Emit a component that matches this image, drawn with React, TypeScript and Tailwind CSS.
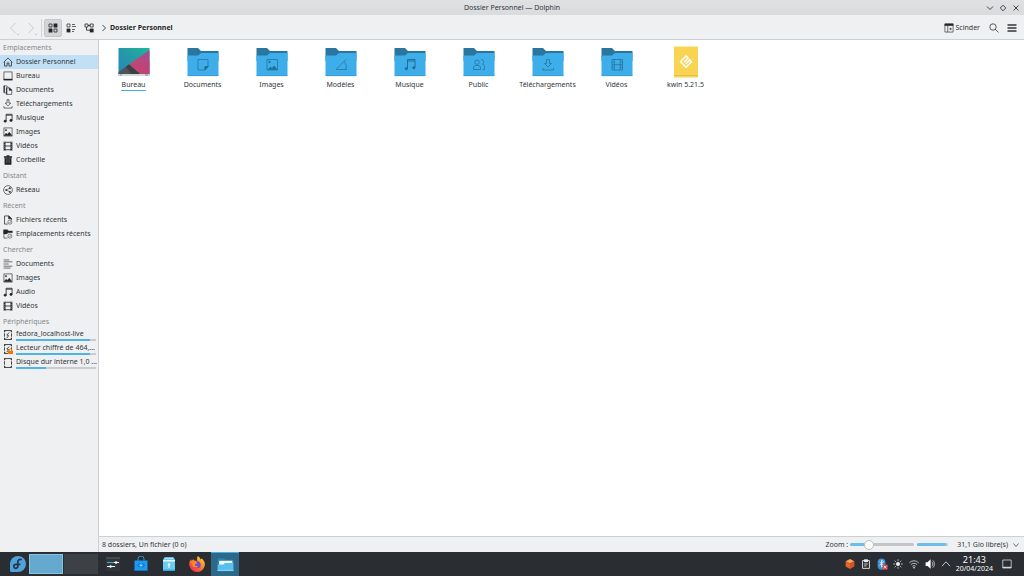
import React from 'react';

type IconName =
  | 'home' | 'desktop' | 'documents' | 'download' | 'music' | 'image' | 'video' | 'trash'
  | 'network' | 'recentFile' | 'recentFolder' | 'lines' | 'disk' | 'lockedDisk' | 'emptyDisk';

interface Place {
  label: string;
  icon: IconName;
  active?: boolean;
  used?: number;
}

interface PlaceGroup {
  title: string;
  places: Place[];
}

const groups: PlaceGroup[] = [
  {
    title: 'Emplacements',
    places: [
      { label: 'Dossier Personnel', icon: 'home', active: true },
      { label: 'Bureau', icon: 'desktop' },
      { label: 'Documents', icon: 'documents' },
      { label: 'Téléchargements', icon: 'download' },
      { label: 'Musique', icon: 'music' },
      { label: 'Images', icon: 'image' },
      { label: 'Vidéos', icon: 'video' },
      { label: 'Corbeille', icon: 'trash' },
    ],
  },
  { title: 'Distant', places: [{ label: 'Réseau', icon: 'network' }] },
  {
    title: 'Récent',
    places: [
      { label: 'Fichiers récents', icon: 'recentFile' },
      { label: 'Emplacements récents', icon: 'recentFolder' },
    ],
  },
  {
    title: 'Chercher',
    places: [
      { label: 'Documents', icon: 'lines' },
      { label: 'Images', icon: 'image' },
      { label: 'Audio', icon: 'music' },
      { label: 'Vidéos', icon: 'video' },
    ],
  },
];

const devices: Place[] = [
  { label: 'fedora_localhost-live', icon: 'disk', used: 93 },
  { label: 'Lecteur chiffré de 464,...', icon: 'lockedDisk', used: 93 },
  { label: 'Disque dur interne 1,0 ...', icon: 'emptyDisk', used: 37 },
];

const diskFrame = (
  <>
    <rect x="2.5" y="1" width="11" height="14" strokeWidth="1.3" />
    <path d="M1 4.500h3M1 11.500h3M12 4.500h3M12 11.500h3" stroke="#eff0f1" strokeWidth="1.500" />
    <path d="M3 1v1.500M13 1v1.500M3 13.500V15M13 13.500V15" strokeWidth="2" />
  </>
);

const icons: Record<IconName, React.ReactNode> = {
  home: <path d="M1 8.500 8 1.500l7 7M2.500 7.500v7h4v-5h3v5h4v-7" strokeWidth="1.200" />,
  desktop: (
    <>
      <rect x="1.500" y="1.500" width="13" height="13" />
      <path d="M1 13.500h14" strokeWidth="2" />
    </>
  ),
  documents: (
    <>
      <path d="M4.500 12.500h-3v-11h5l2 2" />
      <path d="M5.500 4.500h5l3.500 3.500v7H5.500z" />
      <path d="M10 4.500v4h4z" fill="currentColor" />
      <path d="M2 1v11M6 4v11" strokeWidth="1.600" />
    </>
  ),
  download: <path d="M6.500 1v5.500H3.500L8 11l4.500-4.500h-3V1zM1.500 11.500v3h13v-3" />,
  music: (
    <>
      <path d="M5 12.500V2h9.500v9.500M5 3.500h9.500" strokeWidth="1.300" />
      <ellipse cx="3.500" cy="13" rx="2" ry="1.700" fill="currentColor" />
      <ellipse cx="12.800" cy="11.800" rx="2" ry="1.700" fill="currentColor" />
    </>
  ),
  image: (
    <>
      <rect x="1.500" y="1.500" width="13" height="13" />
      <path d="m2 13.500 3-3.500 2 2 3-3.500 4 5z" fill="currentColor" />
      <circle cx="4.800" cy="5" r="1" fill="currentColor" />
    </>
  ),
  video: (
    <>
      <path d="M2.500 1v14M13.500 1v14" strokeWidth="3" />
      <path d="M3 2h10M3 8h10M3 14h10" strokeWidth="1.300" />
      <path d="M2.500 2v12M13.500 2v12" stroke="#eff0f1" strokeWidth="1" strokeDasharray="1 2" />
    </>
  ),
  trash: (
    <>
      <path d="M2 2.500h4V1h4v1.500h4V4H2zM3 5h10v10H3z" fill="currentColor" />
      <path d="M6.300 6.500v6M9.700 6.500v6" stroke="#8a8d90" />
    </>
  ),
  network: (
    <>
      <circle cx="8" cy="8" r="7" />
      <path d="m11 5-5.500 3 5.500 3" strokeWidth=".8" />
      <circle cx="11" cy="5" r="1" fill="currentColor" />
      <circle cx="5" cy="8" r="1" fill="currentColor" />
      <circle cx="11" cy="11" r="1" fill="currentColor" />
    </>
  ),
  recentFile: (
    <>
      <path d="M7.500 14.500h-5v-13h7l4 4v2.500" strokeWidth="1.200" />
      <path d="M9 1.500v4.500h4.500z" fill="currentColor" />
      <circle cx="11" cy="11.500" r="3.300" strokeWidth=".8" />
      <path d="m9.500 12 1 1 2-3" strokeWidth=".8" />
    </>
  ),
  recentFolder: (
    <>
      <path d="M7 14.500H1.500v-13" />
      <path d="M1 1h6l2 2h6v3H8L6 8H1z" fill="currentColor" strokeWidth=".5" />
      <circle cx="11" cy="11.500" r="3.300" strokeWidth=".8" />
      <path d="m9.500 12 1 1 2-3" strokeWidth=".8" />
    </>
  ),
  lines: <path d="M1 1.500h9M1 4.500h14M1 8h8M1 11.500h14M1 14.500h11" />,
  disk: (
    <>
      {diskFrame}
      <path d="M10 4 6 8l3 1-3 4" strokeWidth="1.300" />
    </>
  ),
  lockedDisk: (
    <>
      {diskFrame}
      <path d="M10 4 6 8l3 1-3 4" strokeWidth="1.300" />
      <path d="M8 11h8v5H8z" fill="#f67400" stroke="none" />
      <path d="M10 11V9.500a2 2 0 0 1 4 0V11" stroke="#f67400" strokeWidth="1.400" />
    </>
  ),
  emptyDisk: diskFrame,
};

const PlaceIcon: React.FC<{ name: IconName }> = ({ name }) => (
  <svg viewBox="0 0 16 16" className="size-[10px] shrink-0 text-[#232629]" fill="none" stroke="currentColor">
    {icons[name]}
  </svg>
);

const PlaceRow: React.FC<{ place: Place }> = ({ place }) => (
  <li>
    <a
      href="#"
      className={`flex h-[14px] items-center gap-[3px] pl-[3px] pr-[2px] ${place.active ? 'bg-[#c2e0f5]' : ''}`}
    >
      <PlaceIcon name={place.icon} />
      {place.used === undefined ? (
        <span className="truncate">{place.label}</span>
      ) : (
        <span className="flex min-w-0 flex-1 flex-col">
          <span className="leading-[10px] whitespace-nowrap">{place.label}</span>
          <span className="h-[2px] bg-[#c9cbcd]">
            <span className="block h-[2px] bg-[#4db3e9]" style={{ width: `${place.used}%` }} />
          </span>
        </span>
      )}
    </a>
  </li>
);

const GroupTitle: React.FC<{ children: React.ReactNode }> = ({ children }) => (
  <h2 className="flex h-[14px] items-center pl-[3px] text-[#85888b]">{children}</h2>
);

const Sidebar: React.FC = () => (
  <nav className="flex w-[99px] shrink-0 flex-col gap-[2px] border-r border-[#cdcfd0] pt-px">
    {groups.map((group) => (
      <section key={group.title}>
        <GroupTitle>{group.title}</GroupTitle>
        <ul>
          {group.places.map((place) => <PlaceRow key={place.label} place={place} />)}
        </ul>
      </section>
    ))}
    <section>
      <GroupTitle>Périphériques</GroupTitle>
      <ul className="-mt-px">
        {devices.map((place) => <PlaceRow key={place.label} place={place} />)}
      </ul>
    </section>
  </nav>
);

const Folder: React.FC<{ children: React.ReactNode }> = ({ children }) => (
  <svg viewBox="0 0 32 32" className="size-8" fill="none">
    <path d="M.5 2h10.500l3 3h17.500v10H.5z" fill="#2a769f" />
    <path d="M.5 9.500H11l3-2.500h17.500v23H.5z" fill="#3daee9" />
    <path d="M.5 29.700h31" stroke="#3693c4" strokeWidth=".6" />
    <g stroke="#246d94" strokeWidth=".7">{children}</g>
  </svg>
);

const files: { name: string; selected?: boolean; art: React.ReactNode }[] = [
  {
    name: 'Bureau',
    selected: true,
    art: (
      <svg viewBox="0 0 32 32" className="size-8">
        <defs>
          <linearGradient id="teal" x1="0" x2="1" y1="1" y2="0">
            <stop offset="0" stopColor="#2486b8" />
            <stop offset=".55" stopColor="#2699a8" />
            <stop offset="1" stopColor="#1cb997" />
          </linearGradient>
          <linearGradient id="pink" x1="0" x2="1" y1="1" y2="0">
            <stop offset="0" stopColor="#d24a5c" />
            <stop offset="1" stopColor="#a2489a" />
          </linearGradient>
        </defs>
        <path d="M.5 2h31v28H.5z" fill="url(#teal)" />
        <path d="M31.500 4v24H22L11 18.500z" fill="url(#pink)" />
        <path d="m11 18.500 20.500-3.500v13H22z" fill="#bf4376" opacity=".7" />
        <path d="M.5 26 11 18.500 22 28H.5z" fill="#4d5459" />
        <path d="m11 18.500 11 9.500H13l-5-7.500z" fill="#3b4045" />
        <path d="M.5 28h31v2H.5z" fill="#d5d8db" />
        <path d="M2 29h2M27 29h3" stroke="#777c80" strokeWidth=".8" />
      </svg>
    ),
  },
  { name: 'Documents', art: <Folder><path d="M11 13.500h10v7L18 24h-7zM18 24v-3.500h3z" /><path d="M18 24v-3.500h3z" fill="#246d94" /></Folder> },
  {
    name: 'Images',
    art: (
      <Folder>
        <path d="M11 13.500h10.500V24H11z" />
        <path d="m12 23.500 2.500-2.500 1.500 1.500 2-2.500 3 3.500z" fill="#246d94" />
        <circle cx="13.500" cy="16" r=".8" fill="#246d94" />
      </Folder>
    ),
  },
  { name: 'Modèles', art: <Folder><path d="M21 13.500 11 23.500h11M19.500 16c1.500 1.500 2.200 4.500 1.500 7" /></Folder> },
  {
    name: 'Musique',
    art: (
      <Folder>
        <path d="M13.500 22.500v-9h7.500v8M13.500 15H21" strokeWidth="1" />
        <circle cx="12.300" cy="22.700" r="1.200" fill="#246d94" />
        <circle cx="19.800" cy="21.800" r="1.200" fill="#246d94" />
      </Folder>
    ),
  },
  {
    name: 'Public',
    art: (
      <Folder>
        <circle cx="14" cy="16.200" r="2.200" />
        <path d="M10.500 23.500v-1.500c0-1.800 1.200-2.500 2.500-2.500h2c1.300 0 2.500.7 2.500 2.500v1.500zM17.800 13.800c3-.8 4 2.700 1.700 4.400 1.700.3 2 1.300 2 2.500v2.800h-2" />
      </Folder>
    ),
  },
  { name: 'Téléchargements', art: <Folder><path d="M14.500 13.500v4h-2L16 21l3.500-3.500h-2v-4zM11 22v2h10.500v-2" /></Folder> },
  {
    name: 'Vidéos',
    art: (
      <Folder>
        <path d="M11 13.500h10.500V24H11zM13.300 13.500V24M19.200 13.500V24M13.300 18.700h5.900M11 16.100h2.300M11 18.700h2.300M11 21.300h2.300M19.200 16.100h2.300M19.200 18.700h2.300M19.200 21.300h2.300" />
      </Folder>
    ),
  },
  {
    name: 'kwin 5.21.5',
    art: (
      <svg viewBox="0 0 32 32" className="size-8" fill="none">
        <path d="M4 .5h24V31.500H4z" fill="#f9d453" />
        <path d="M4 29.200h24v.8H4z" fill="#dfbd48" />
        <path d="m14 16.300 4.200-4.200-2.200-2.100-5.500 5.700L16 21.200l5.500-5.500-1.800-1.800-3.900 4" stroke="#fff" strokeWidth="1.500" />
      </svg>
    ),
  },
];

const FileGrid: React.FC = () => (
  <main className="flex-1 bg-white pt-[6px]">
    <ul className="grid grid-cols-[repeat(auto-fill,69px)]">
      {files.map((file) => (
        <li key={file.name}>
          <a href="#" className="flex flex-col items-center gap-px">
            {file.art}
            <span className={`h-3 px-px leading-3 whitespace-nowrap ${file.selected ? 'border-b border-[#3daee9]' : ''}`}>
              {file.name}
            </span>
          </a>
        </li>
      ))}
    </ul>
  </main>
);

const TitleBar: React.FC = () => (
  <header className="grid h-[15px] grid-cols-[1fr_auto_1fr] items-center bg-linear-to-b from-[#dfe1e3] to-[#d9dbdd] px-1">
    <h1 className="col-start-2">Dossier Personnel — Dolphin</h1>
    <div className="flex justify-end gap-[5px] text-[#31363b]">
      <button aria-label="Réduire">
        <svg viewBox="0 0 8 8" className="size-2" fill="none" stroke="currentColor"><path d="m1 2.500 3 3 3-3" strokeWidth=".9" /></svg>
      </button>
      <button aria-label="Restaurer">
        <svg viewBox="0 0 8 8" className="size-2" fill="none" stroke="currentColor"><path d="M4 1.200 6.800 4 4 6.800 1.200 4z" strokeWidth=".9" /></svg>
      </button>
      <button aria-label="Fermer">
        <svg viewBox="0 0 8 8" className="size-2" fill="none" stroke="currentColor"><path d="m1.500 1.500 5 5m0-5-5 5" strokeWidth=".9" /></svg>
      </button>
    </div>
  </header>
);

const NavButton: React.FC<{ label: string; d: string }> = ({ label, d }) => (
  <button aria-label={label} disabled className="flex h-[18px] w-[18px] items-center justify-center text-[#bfc2c4]">
    <svg viewBox="0 0 18 18" className="size-[18px]" fill="none" stroke="currentColor">
      <path d={d} strokeWidth=".8" />
      <path d="m11.500 14.500 1.500 1.500 1.500-1.500" strokeWidth=".8" />
    </svg>
  </button>
);

const ToolBar: React.FC = () => (
  <div className="flex h-[25px] items-center justify-between border-b border-[#cdcfd0] pt-px pr-1 pl-[5px]">
    <div className="flex items-center">
      <NavButton label="Précédent" d="M10.500 4 5.500 9l5 5" />
      <NavButton label="Suivant" d="m5.500 4 5 5-5 5" />
      <span className="mr-[2px] h-[18px] w-px bg-[#d2d4d6]" />
      <button aria-label="Icônes" aria-pressed="true" className="flex size-[18px] items-center justify-center rounded-xs border border-[#c5c7c9] bg-[#d3d5d7]">
        <svg viewBox="0 0 10 10" className="size-[10px]" fill="none" stroke="#232629">
          <path d="M1 1h3v3H1zM6 6h3v3H6z" strokeWidth=".8" />
          <path d="M5.600.6h3.800v3.800H5.600zM.6 5.600h3.800v3.800H.6z" fill="#232629" stroke="none" />
        </svg>
      </button>
      <button aria-label="Compact" className="flex size-[18px] items-center justify-center">
        <svg viewBox="0 0 10 10" className="size-[10px]" fill="none" stroke="#232629">
          <path d="M1 1h3v3H1zM6 1.500h3M6 3.500h4M6 6.500h3M6 8.500h2" strokeWidth=".7" />
          <path d="M.6 5.600h3.800v3.800H.6z" fill="#232629" stroke="none" />
        </svg>
      </button>
      <button aria-label="Arborescence" className="flex size-[18px] items-center justify-center">
        <svg viewBox="0 0 10 10" className="size-[10px]" fill="none" stroke="#232629">
          <path d="M1 1h3v3H1zM6.200 1h3v3h-3zM4 2.500h2.200M2.500 4v3.200H6" strokeWidth=".8" />
          <path d="M5.800 5.600h3.800v3.800H5.800z" fill="#232629" stroke="none" />
        </svg>
      </button>
      <svg viewBox="0 0 8 8" className="mx-[2px] size-2" fill="none" stroke="#31363b"><path d="m2.500 1 3 3-3 3" strokeWidth=".9" /></svg>
      <a href="#" className="font-bold text-[#232629]">Dossier Personnel</a>
    </div>
    <div className="flex items-center">
      <button className="mr-[9px] flex items-center gap-[2px]">
        <svg viewBox="0 0 16 16" className="size-[10px]" fill="none" stroke="#232629">
          <path d="M1.500 1.500h13v13h-13zM6 4v10.500" />
          <path d="M1 1h14v3.500H1z" fill="#232629" stroke="none" />
          <path d="M8.500 9.500h4M10.500 7.500v4" />
        </svg>
        Scinder
      </button>
      <button aria-label="Rechercher" className="mr-2">
        <svg viewBox="0 0 10 10" className="size-[10px]" fill="none" stroke="#31363b">
          <circle cx="4" cy="4" r="3.200" strokeWidth=".8" />
          <path d="m6.200 6.200 3.300 3.300" strokeWidth=".8" />
        </svg>
      </button>
      <button aria-label="Menu" className="mr-[3px]">
        <svg viewBox="0 0 10 10" className="size-[10px]" stroke="#31363b"><path d="M.5 2h9M.5 5h9M.5 8h9" strokeWidth="1.300" /></svg>
      </button>
    </div>
  </div>
);

const StatusBar: React.FC = () => (
  <footer className="flex h-4 items-center justify-between border-t border-[#cdcfd0] pl-[3px] pr-1">
    <span>8 dossiers, Un fichier (0 o)</span>
    <div className="flex items-center">
      <label htmlFor="zoom" className="mr-[2px]">Zoom :</label>
      <input
        id="zoom"
        type="range"
        min="0"
        max="100"
        defaultValue="26"
        className="mr-[3px] h-[3px] w-16 appearance-none rounded-full bg-[linear-gradient(to_right,#6cbfea_28%,#c3c5c7_28%)] [&::-webkit-slider-thumb]:size-[10px] [&::-webkit-slider-thumb]:appearance-none [&::-webkit-slider-thumb]:rounded-full [&::-webkit-slider-thumb]:border [&::-webkit-slider-thumb]:border-[#bcbec0] [&::-webkit-slider-thumb]:bg-[#fcfcfc]"
      />
      <div className="mr-[9px] h-[3px] w-[31px] rounded-full bg-[#c3c5c7]">
        <div className="h-full w-11/12 rounded-full bg-[#6cbfea]" />
      </div>
      <span className="mr-1">31,1 Gio libre(s)</span>
      <button aria-label="Espace disque">
        <svg viewBox="0 0 8 8" className="size-2" fill="none" stroke="#31363b"><path d="m1.500 2.500 2.500 3 2.500-3" strokeWidth=".7" /></svg>
      </button>
    </div>
  </footer>
);

const launchers: { label: string; active?: boolean; art: React.ReactNode }[] = [
  {
    label: 'Configuration',
    art: (
      <>
        <path d="M1 1h14v14H1z" fill="#31363b" />
        <path d="M1 1h14v2H1z" fill="#454a4f" />
        <path d="M2 6.500h12" stroke="#f4f5f6" />
        <path d="M2 10.500h8" stroke="#f4f5f6" />
        <path d="M2 6.500h7" stroke="#3daee9" />
        <circle cx="11" cy="6.500" r="1.200" fill="#fff" />
        <circle cx="5.500" cy="10.500" r="1.200" fill="#fff" />
      </>
    ),
  },
  {
    label: 'Discover',
    art: (
      <>
        <path d="M5 4.500V3a3 3 0 0 1 6 0v1.500" fill="none" stroke="#2298df" />
        <path d="M1.500 4.500h13v10h-13z" fill="#1d99f3" />
        <path d="M1.500 14h13v1h-13z" fill="#1478bd" />
        <path d="m6.500 7.200-2 2.100 2 2M9.500 7.200l2 2.100-2 2" fill="none" stroke="#1360a0" strokeWidth=".9" />
        <circle cx="8" cy="9.300" r=".8" fill="#fff" />
      </>
    ),
  },
  {
    label: 'Fichiers',
    art: (
      <>
        <path d="M2 3.500 3.500 1.500h9L14 3.500V15H2z" fill="#65cef5" />
        <path d="M2 4h12v1.500H2z" fill="#e9f8fe" />
        <path d="M2 13.500h12V15H2z" fill="#37a4df" />
        <path d="M3.500 1.500h9v1.300h-9z" fill="#b7e9fb" />
        <circle cx="8" cy="8.500" r="1.300" fill="#fff" />
        <path d="M8 8.500v3.500" stroke="#fff" />
      </>
    ),
  },
  {
    label: 'Firefox',
    art: (
      <>
        <defs>
          <linearGradient id="fox" x1="1" x2=".2" y1="0" y2="1">
            <stop offset="0" stopColor="#ffe14a" />
            <stop offset=".45" stopColor="#ff9220" />
            <stop offset="1" stopColor="#ef2457" />
          </linearGradient>
        </defs>
        <path d="M8.800 0c2 1.300 2.500 2.500 2.700 3.600l1.200-1c2 1.500 3.200 3.700 3.200 6A7.700 7.700 0 0 1 8 16 7.800 7.800 0 0 1 .2 8.300c0-2 .8-3.800 1.800-5l.5 1.600L4.300 3l.7 1.500c1.400-.2 2.700.2 3.600.9C7.500 3.500 8 1.500 8.800 0z" fill="url(#fox)" />
        <circle cx="8.200" cy="8.700" r="3.500" fill="#7b45d6" />
        <path d="M1.500 4.500c1.500 1 3.500.8 5.800 1.500l1 1.200c-1.500.3-2.500.6-2.200 2 .3 1 2 1.200 3.200.5-.8 2.500-4.500 2.300-5.700-.5z" fill="#ff8b1c" />
      </>
    ),
  },
  {
    label: 'Dolphin',
    active: true,
    art: (
      <>
        <path d="M.5 2h6L8 3.500h7.500v4H.5z" fill="#2484b8" />
        <path d="M2 4.500h12.500V10H2z" fill="#fcfcfc" />
        <path d="M.5 8H6l1.500-1.500h8V14H.5z" fill="#56c1f0" />
        <path d="M.5 13h15v1.200H.5z" fill="#7dd0f4" />
      </>
    ),
  },
];

const trayIcons: { label: string; art: React.ReactNode }[] = [
  {
    label: 'Boîte',
    art: (
      <>
        <path d="m8 0 7 3.500L8 7 1 3.500z" fill="#f9a34d" />
        <path d="M1 3.500 8 7v9l-7-4z" fill="#e8622c" />
        <path d="M15 3.500 8 7v9l7-4z" fill="#d0552a" />
      </>
    ),
  },
  {
    label: 'Presse-papiers',
    art: (
      <>
        <path d="M2.500 2.500h11v12.500h-11z" fill="none" stroke="#eff0f1" strokeWidth="1.400" />
        <path d="M5 .5h6V5H5z" fill="#eff0f1" />
        <path d="M5 8h6M5 11h4" stroke="#eff0f1" strokeWidth="1.300" />
      </>
    ),
  },
  {
    label: 'Bluetooth',
    art: (
      <>
        <rect x="1" y="-1" width="12.500" height="18" rx="6" fill="#3b8fd4" />
        <path d="m4 4.500 6.500 6L7.300 13V2l3.200 2.500-6.500 6" fill="none" stroke="#fff" strokeWidth="1.200" />
        <path d="M9 9h8v8H9z" fill="#da4453" />
        <path d="m11 11 4 4m0-4-4 4" stroke="#fff" strokeWidth="1.300" />
      </>
    ),
  },
  {
    label: 'Luminosité',
    art: (
      <>
        <circle cx="8" cy="8" r="2.800" fill="#eff0f1" stroke="#eff0f1" />
        <path d="M8 .5v2.500M8 13v2.500M.5 8H3M13 8h2.500M2.700 2.700l1.800 1.800M11.500 11.500l1.800 1.800M13.300 2.700l-1.800 1.800M4.500 11.500l-1.800 1.800" stroke="#eff0f1" strokeWidth="1.200" />
      </>
    ),
  },
  {
    label: 'Wi-Fi',
    art: (
      <>
        <path d="M.5 6a10.500 10.500 0 0 1 15 0M3 9a7 7 0 0 1 10 0M5.500 11.700a3.500 3.500 0 0 1 5 0" fill="none" stroke="#d5d7d9" strokeWidth="1.300" />
        <circle cx="8" cy="14" r="1.300" fill="#fff" />
      </>
    ),
  },
  {
    label: 'Volume',
    art: (
      <>
        <path d="M1 5h3l5-4.500v15L4 11H1z" fill="#fcfcfc" />
        <path d="M11 4.500c2 2 2 5 0 7M12.500 2c3.300 3.300 3.300 8.700 0 12" fill="none" stroke="#d5d7d9" strokeWidth="1.200" />
      </>
    ),
  },
  { label: 'Plus', art: <path d="m1.500 11.500 6.500-7 6.500 7" fill="none" stroke="#eff0f1" strokeWidth="1.200" /> },
];

const TaskBar: React.FC = () => (
  <div className="flex h-6 items-stretch justify-between bg-[#2a2e32] text-[#fcfcfc]">
    <div className="flex items-stretch">
      <button aria-label="Menu des applications" className="mr-[2px] ml-[9px] flex items-center">
        <svg viewBox="0 0 18 18" className="size-[18px]" fill="none">
          <path d="M9 1a8 8 0 1 1 0 16H2.500A1.500 1.500 0 0 1 1 15.500V9a8 8 0 0 1 8-8z" fill="#51a2da" />
          <path d="M12.800 4.700c-2.200-.9-4 .4-4 2.400v4.200c0 2.500-3.800 2.800-4 .2-.1-1.600 1.200-2.300 2.400-2.200h4.200" stroke="#20384b" strokeWidth="1.700" />
        </svg>
      </button>
      <div className="flex items-center gap-px py-[2px]">
        <button aria-label="Bureau 1" className="h-5 w-[34px] border border-[#87c5e6] bg-[#65aace]" />
        <button aria-label="Bureau 2" className="h-5 w-[34px] bg-[#3d4146]" />
      </div>
      <div className="ml-px flex items-stretch">
        {launchers.map((app) => (
          <button
            key={app.label}
            aria-label={app.label}
            className={`flex w-7 items-center justify-center ${app.active ? 'border-t border-[#3daee9] bg-[#2f6887]' : ''}`}
          >
            <svg viewBox="0 0 16 16" className={app.active ? 'size-[17px]' : 'size-4'}>{app.art}</svg>
          </button>
        ))}
      </div>
    </div>
    <div className="flex items-center pr-3">
      <div className="mr-[5px] flex gap-[6px]">
        {trayIcons.map((item) => (
          <button key={item.label} aria-label={item.label}>
            <svg viewBox="0 0 16 16" className="size-[10px] overflow-visible">{item.art}</svg>
          </button>
        ))}
      </div>
      <time className="mr-[9px] flex flex-col items-center">
        <span className="text-[9px] leading-[10px]">21:43</span>
        <span className="leading-[8px]">20/04/2024</span>
      </time>
      <button aria-label="Afficher le bureau">
        <svg viewBox="0 0 10 10" className="size-[10px]" fill="none" stroke="#eff0f1">
          <path d="M.8 1h8.400v8H.8z" strokeWidth=".7" />
          <path d="M.8 8.300h8.400" strokeWidth="1" />
        </svg>
      </button>
    </div>
  </div>
);

export default function App() {
  return (
    <div className="flex min-h-screen flex-col bg-[#eff0f1] font-['Noto_Sans',sans-serif] text-[7px] leading-[10px] text-[#31363b]">
      <TitleBar />
      <ToolBar />
      <div className="flex flex-1">
        <Sidebar />
        <div className="flex min-w-0 flex-1 flex-col">
          <FileGrid />
          <StatusBar />
        </div>
      </div>
      <TaskBar />
    </div>
  );
}
